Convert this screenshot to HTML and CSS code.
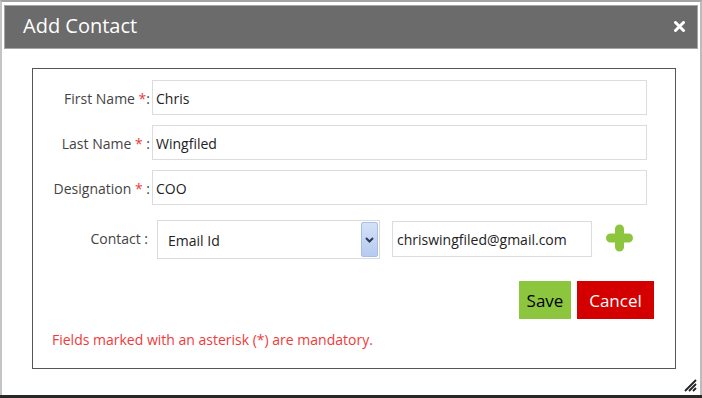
FILE: index.html
```html
<!DOCTYPE html>
<html>
<head>
<meta charset="utf-8">
<link rel="stylesheet" href="styles.css">
</head>
<body>
<div class="dialog">
  <div class="titlebar">
    <span class="title">Add Contact</span>
    <svg class="close" width="11" height="11" viewBox="0 0 11 11"><path d="M1.5 1.5 L9.5 9.5 M9.5 1.5 L1.5 9.5" stroke="#fff" stroke-width="3" stroke-linecap="round"/></svg>
  </div>
  <div class="panel">
    <div class="form">
      <label class="lbl">First Name <span class="req">*</span>:</label>
      <div class="input">Chris</div>
      <label class="lbl">Last Name <span class="req">*</span> :</label>
      <div class="input">Wingfiled</div>
      <label class="lbl">Designation <span class="req">*</span> :</label>
      <div class="input">COO</div>
    </div>
    <div class="contact-row">
      <label class="lbl contact-lbl">Contact :</label>
      <div class="select">
        <span>Email Id</span>
        <span class="arrow"><svg width="9" height="6" viewBox="0 0 9 6"><path d="M1 1 L4.5 4.5 L8 1" fill="none" stroke="#2b3a55" stroke-width="2"/></svg></span>
      </div>
      <div class="input email">chriswingfiled@gmail.com</div>
      <svg class="plus" width="29" height="28" viewBox="0 0 29 28"><path d="M14.5 5 V23 M5.5 14 H23.5" stroke="#8cc63e" stroke-width="9" stroke-linecap="round"/></svg>
    </div>
    <div class="actions">
      <button class="btn save">Save</button>
      <button class="btn cancel">Cancel</button>
    </div>
    <p class="note">Fields marked with an asterisk (*) are mandatory.</p>
  </div>
  <svg class="grip" width="14" height="14" viewBox="0 0 14 14"><path d="M2 13 L13 2 M6 13 L13 6 M10 13 L13 10" stroke="#222" stroke-width="1.8"/></svg>
</div>
</body>
</html>
```
FILE: styles.css
```css
* { box-sizing: border-box; }
html, body { margin: 0; padding: 0; }
body {
  width: 702px;
  height: 398px;
  background: #2a2826;
  font-family: "Open Sans", "Liberation Sans", sans-serif;
  overflow: hidden;
}
.dialog {
  position: relative;
  width: 702px;
  height: 395px;
  background: #fff;
  border-top: 2px solid #a3a3a3;
  border-left: 2px solid #c4c4c4;
  border-right: 2px solid #bcbcbc;
  padding: 3px 2px 0 2px;
}
.titlebar {
  height: 44px;
  background: #6b6b6b;
  border: 1px solid #a5a5a5;
  display: flex;
  align-items: center;
  justify-content: space-between;
  padding: 0 12px 0 18px;
}
.title {
  color: #fff;
  font-size: 20px;
  line-height: 1;
  margin-top: -2px;
}
.close { display: block; margin-top: -2px; }
.panel {
  margin: 19px 0 0 28px;
  width: 644px;
  height: 301px;
  border: 1px solid #555;
  padding: 11px 0 0 0;
}
.form {
  display: grid;
  grid-template-columns: 119px 495px;
  row-gap: 10px;
  align-items: center;
}
.lbl {
  font-size: 14px;
  color: #444;
  text-align: right;
  padding-right: 2px;
  padding-top: 2px;
}
.req { color: #f03a3a; }
.input {
  height: 35px;
  border: 1px solid #dcdcdc;
  background: #fff;
  font-size: 14px;
  color: #222;
  padding: 2px 3px 0;
  display: flex;
  align-items: center;
}
.contact-row {
  display: flex;
  align-items: center;
  margin-top: 15px;
}
.contact-lbl {
  width: 117px;
  margin-top: -4px;
}
.select {
  margin-left: 7px;
  width: 223px;
  height: 39px;
  border: 1px solid #dadada;
  display: flex;
  align-items: center;
  justify-content: space-between;
  padding: 0 1px 0 10px;
  font-size: 14px;
  color: #222;
}
.select span:first-child { margin-top: 2px; }
.arrow {
  width: 17px;
  height: 35px;
  background: linear-gradient(#d4e1f8, #b6cbf2);
  border: 1px solid #a9bde6;
  border-radius: 2px;
  display: flex;
  align-items: center;
  justify-content: center;
}
.email {
  margin-left: 12px;
  width: 200px;
  height: 36px;
  padding-left: 4px;
  margin-top: -2px;
}
.plus { margin-left: 13px; margin-top: -4px; display: block; }
.actions {
  display: flex;
  justify-content: flex-end;
  gap: 6px;
  margin-top: 22px;
  padding-right: 21px;
}
.btn {
  font-family: inherit;
  font-size: 17px;
  border: 0;
  height: 38px;
  padding: 0;
  margin: 0;
}
.save {
  width: 52px;
  background: #8cc63e;
  color: #000;
  font-weight: 500;
}
.cancel {
  width: 77px;
  background: #d40000;
  color: #fff;
}
.note {
  margin: 11px 0 0 19px;
  font-size: 14px;
  color: #f03a3a;
}
.grip {
  position: absolute;
  right: 3px;
  bottom: 3px;
}
```
